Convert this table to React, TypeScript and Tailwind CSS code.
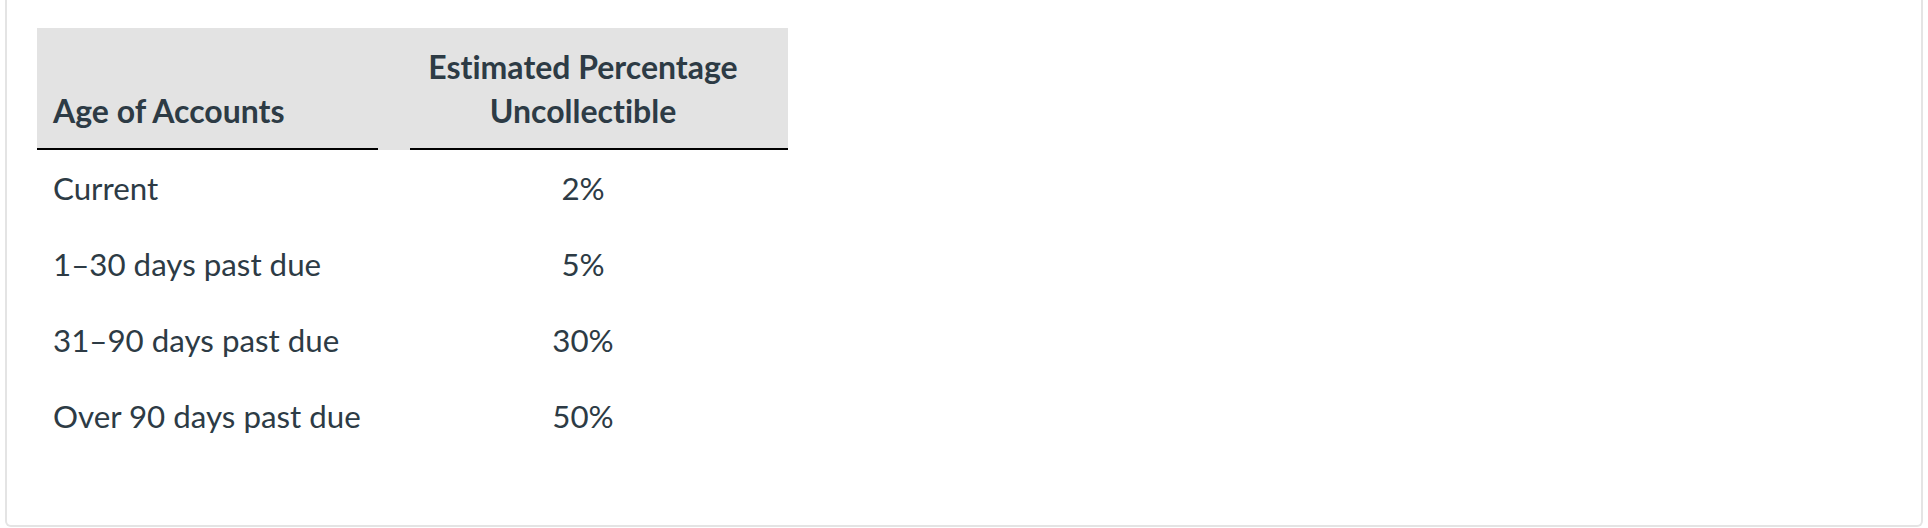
const ROWS = [
  { age: 'Current', pct: '2%' },
  { age: '1–30 days past due', pct: '5%' },
  { age: '31–90 days past due', pct: '30%' },
  { age: 'Over 90 days past due', pct: '50%' },
];

function AgingTable() {
  return (
    <div className="w-[751px]">
      <div className="grid grid-cols-[341px_410px] bg-[#e3e3e3] text-[32px] font-bold">
        <div className="flex items-end border-b-2 border-black px-4 pt-[17px] pb-[15px]">
          Age of Accounts
        </div>
        <div className="flex flex-col">
          <div className="flex flex-col items-center pt-[17px] pb-[15px]">
            <span>Estimated Percentage</span>
            <span>Uncollectible</span>
          </div>
          <div className="ml-8 border-b-2 border-black" />
        </div>
      </div>
      {ROWS.map((row) => (
        <div key={row.age} className="grid h-[76px] grid-cols-[341px_410px] items-center text-[31.3px]">
          <div className="whitespace-nowrap px-4">{row.age}</div>
          <div className="text-center">{row.pct}</div>
        </div>
      ))}
    </div>
  );
}

export default function App() {
  return (
    <div className="h-[528px] w-[1928px] overflow-hidden bg-white">
      <div
        className="mx-[5px] h-[527px] rounded-b-md border-x-2 border-b-2 border-[#e4e4e4] pt-7 pl-[30px] leading-[44px] text-[#2d3b45] [font-variant-ligatures:none]"
        style={{ fontFamily: 'Lato, "Liberation Sans", sans-serif' }}
      >
        <AgingTable />
      </div>
    </div>
  );
}
